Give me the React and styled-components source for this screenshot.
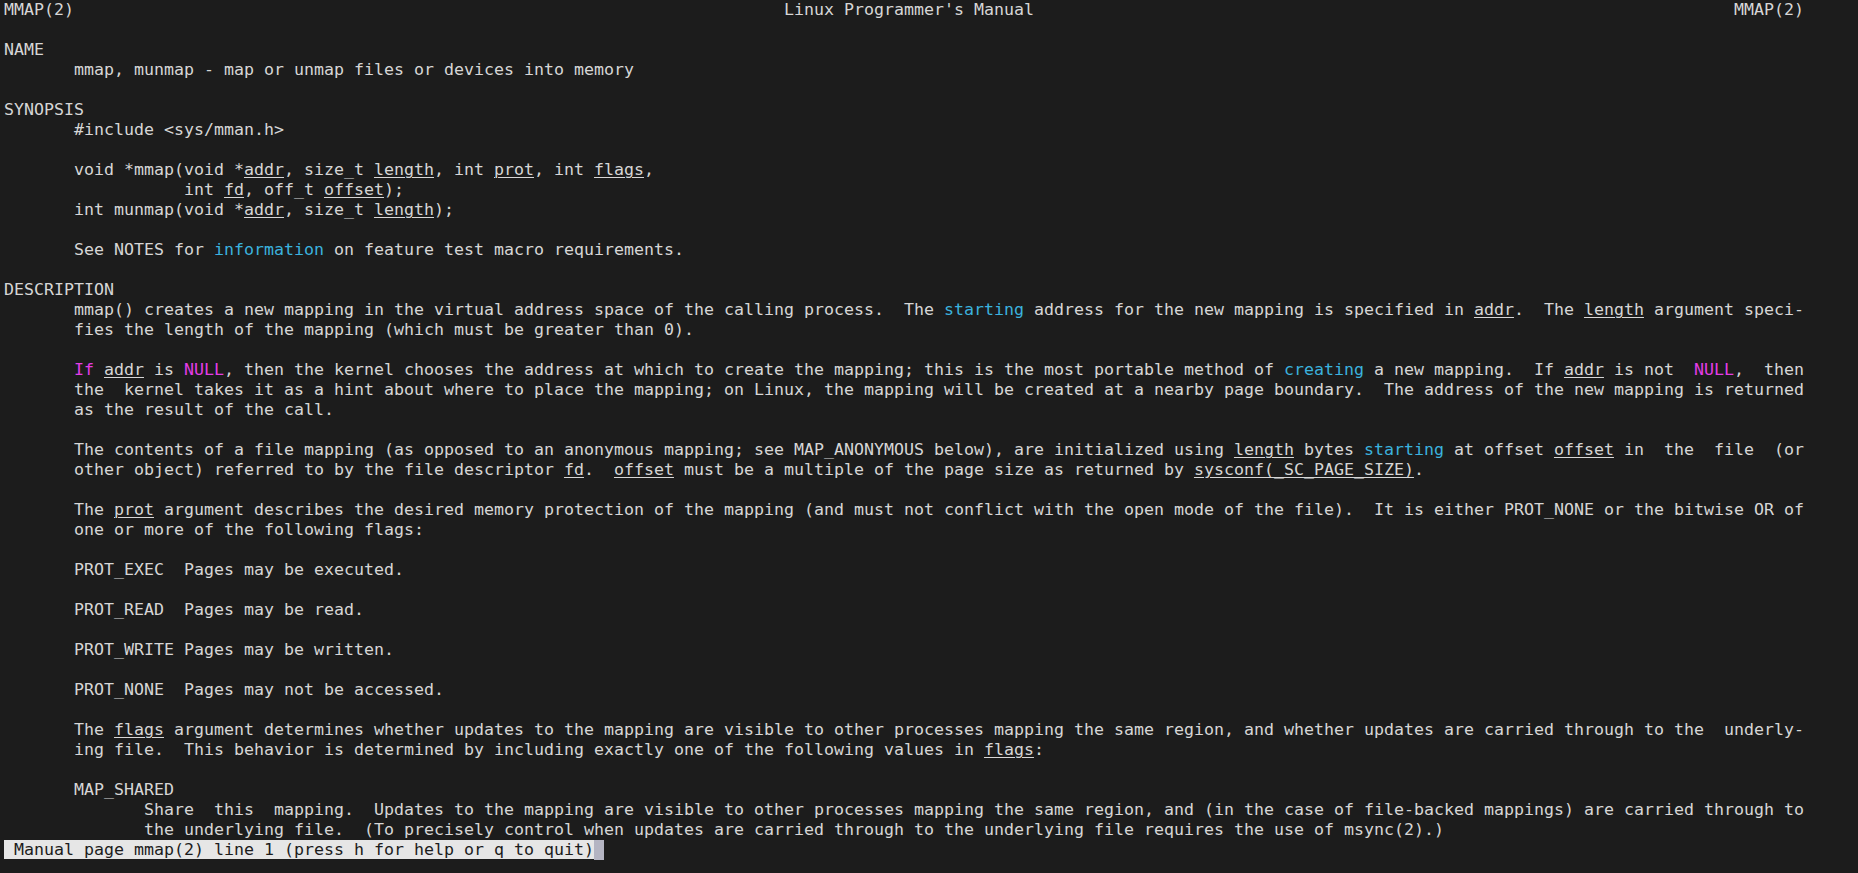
import React from 'react';
import styled, { createGlobalStyle } from 'styled-components';

// markup: ~x~ underlined argument, {x} cyan word, [x] magenta word
const PAGE = [
  "MMAP(2)" + " ".repeat(71) + "Linux Programmer's Manual" + " ".repeat(70) + "MMAP(2)",
  "",
  "NAME",
  "       mmap, munmap - map or unmap files or devices into memory",
  "",
  "SYNOPSIS",
  "       #include <sys/mman.h>",
  "",
  "       void *mmap(void *~addr~, size_t ~length~, int ~prot~, int ~flags~,",
  "                  int ~fd~, off_t ~offset~);",
  "       int munmap(void *~addr~, size_t ~length~);",
  "",
  "       See NOTES for {information} on feature test macro requirements.",
  "",
  "DESCRIPTION",
  "       mmap() creates a new mapping in the virtual address space of the calling process.  The {starting} address for the new mapping is specified in ~addr~.  The ~length~ argument speci-",
  "       fies the length of the mapping (which must be greater than 0).",
  "",
  "       [If] ~addr~ is [NULL], then the kernel chooses the address at which to create the mapping; this is the most portable method of {creating} a new mapping.  If ~addr~ is not  [NULL],  then",
  "       the  kernel takes it as a hint about where to place the mapping; on Linux, the mapping will be created at a nearby page boundary.  The address of the new mapping is returned",
  "       as the result of the call.",
  "",
  "       The contents of a file mapping (as opposed to an anonymous mapping; see MAP_ANONYMOUS below), are initialized using ~length~ bytes {starting} at offset ~offset~ in  the  file  (or",
  "       other object) referred to by the file descriptor ~fd~.  ~offset~ must be a multiple of the page size as returned by ~sysconf(_SC_PAGE_SIZE)~.",
  "",
  "       The ~prot~ argument describes the desired memory protection of the mapping (and must not conflict with the open mode of the file).  It is either PROT_NONE or the bitwise OR of",
  "       one or more of the following flags:",
  "",
  "       PROT_EXEC  Pages may be executed.",
  "",
  "       PROT_READ  Pages may be read.",
  "",
  "       PROT_WRITE Pages may be written.",
  "",
  "       PROT_NONE  Pages may not be accessed.",
  "",
  "       The ~flags~ argument determines whether updates to the mapping are visible to other processes mapping the same region, and whether updates are carried through to the  underly-",
  "       ing file.  This behavior is determined by including exactly one of the following values in ~flags~:",
  "",
  "       MAP_SHARED",
  "              Share  this  mapping.  Updates to the mapping are visible to other processes mapping the same region, and (in the case of file-backed mappings) are carried through to",
  "              the underlying file.  (To precisely control when updates are carried through to the underlying file requires the use of msync(2).)",
];

const GlobalStyle = createGlobalStyle`
  html, body {
    margin: 0;
    padding: 0;
    background: #1c1c1c;
  }
`;

const Terminal = styled.div`
  box-sizing: border-box;
  height: 100vh;
  padding: 0 0 0 4px;
  background: #1c1c1c;
  color: #d6d6d6;
  font-family: "DejaVu Sans Mono", "Liberation Mono", monospace;
  font-size: 16.61px;
  overflow: hidden;
`;

const Line = styled.div`
  height: 20px;
  line-height: 20px;
  white-space: pre;
`;

const Arg = styled.span`
  text-decoration: underline;
  text-underline-offset: 2px;
  text-decoration-thickness: 1px;
`;

const Hl = styled.span`
  color: ${p => (p.$tone === 'magenta' ? '#e33de6' : '#3bb2de')};
`;

const Prompt = styled.span`
  background: #e6e6e6;
  color: #1c1c1c;
`;

const Cursor = styled.span`
  display: inline-block;
  width: 10px;
  height: 20px;
  vertical-align: top;
  background: #b4b4c2;
`;

function renderLine(text) {
  const parts = [];
  const re = /~([^~]+)~|\{([^}]+)\}|\[([^\]]+)\]/g;
  let last = 0;
  let m;
  let k = 0;
  while ((m = re.exec(text))) {
    if (m.index > last) parts.push(text.slice(last, m.index));
    if (m[1]) parts.push(<Arg key={k++}>{m[1]}</Arg>);
    else if (m[2]) parts.push(<Hl key={k++}>{m[2]}</Hl>);
    else parts.push(<Hl key={k++} $tone="magenta">{m[3]}</Hl>);
    last = re.lastIndex;
  }
  if (last < text.length) parts.push(text.slice(last));
  return parts;
}

export default function App() {
  return (
    <>
      <GlobalStyle />
      <Terminal>
        {PAGE.map((text, i) => (
          <Line key={i}>{renderLine(text)}</Line>
        ))}
        <Line>
          <Prompt> Manual page mmap(2) line 1 (press h for help or q to quit)</Prompt>
          <Cursor />
        </Line>
      </Terminal>
    </>
  );
}
